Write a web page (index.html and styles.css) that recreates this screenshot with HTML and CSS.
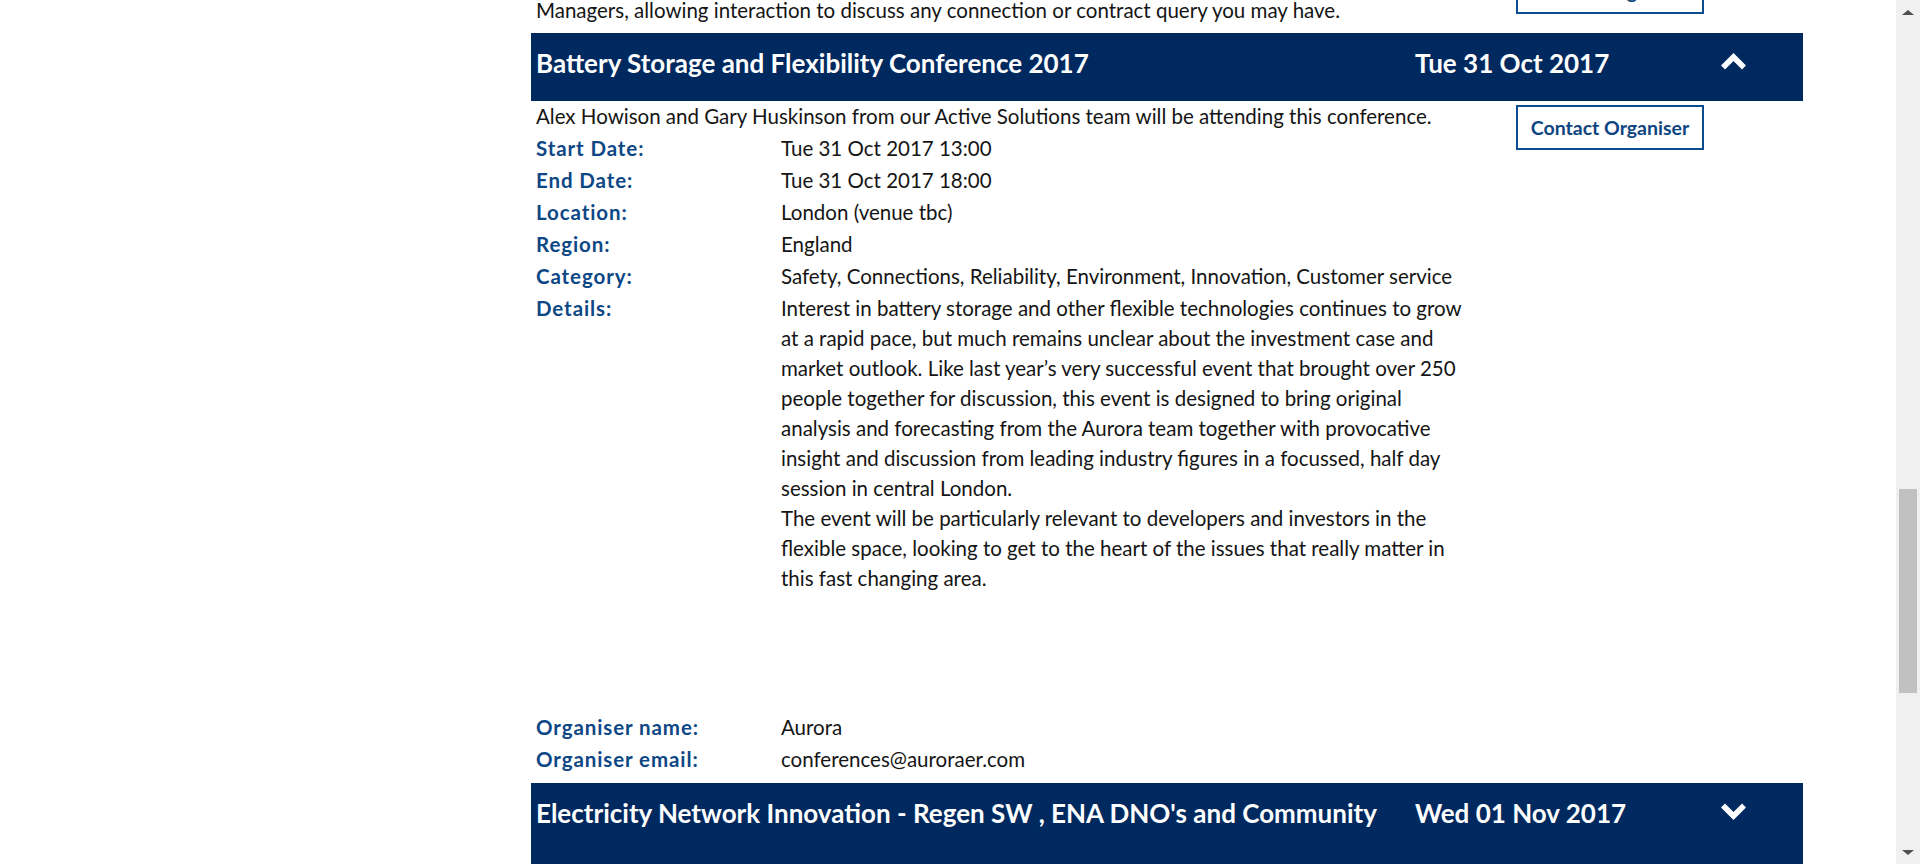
FILE: index.html
```html
<!DOCTYPE html>
<html lang="en">
<head>
<meta charset="utf-8">
<title>Events</title>
<link rel="stylesheet" href="styles.css">
</head>
<body>
<main class="page">
  <div class="events">
    <section class="event">
      <div class="event-body prev">
        <div class="event-main">
          <p class="intro intro-cont">Managers, allowing interaction to discuss any connection or contract query you may have.</p>
        </div>
        <div class="event-actions">
          <a class="btn" href="#">Contact Organiser</a>
        </div>
      </div>
    </section>

    <section class="event">
      <div class="event-head">
        <div class="event-title">Battery Storage and Flexibility Conference 2017</div>
        <div class="event-date">Tue 31 Oct 2017</div>
        <svg class="chev" width="25" height="17" viewBox="0 0 25 17" aria-hidden="true"><polygon points="12.5,0 25,12.5 21,16.5 12.5,8 4,16.5 0,12.5" fill="#fff"/></svg>
      </div>
      <div class="event-body">
        <div class="event-main">
          <p class="intro">Alex Howison and Gary Huskinson from our Active Solutions team will be attending this conference.</p>
          <dl class="info">
            <dt>Start Date:</dt><dd>Tue 31 Oct 2017 13:00</dd>
            <dt>End Date:</dt><dd>Tue 31 Oct 2017 18:00</dd>
            <dt>Location:</dt><dd>London (venue tbc)</dd>
            <dt>Region:</dt><dd>England</dd>
            <dt>Category:</dt><dd>Safety, Connections, Reliability, Environment, Innovation, Customer service</dd>
            <dt>Details:</dt>
            <dd class="details">
              <p>Interest in battery storage and other flexible technologies continues to grow<br>at a rapid pace, but much remains unclear about the investment case and<br>market outlook. Like last year’s very successful event that brought over 250<br>people together for discussion, this event is designed to bring original<br>analysis and forecasting from the Aurora team together with provocative<br>insight and discussion from leading industry figures in a focussed, half day<br>session in central London.</p>
              <p>The event will be particularly relevant to developers and investors in the<br>flexible space, looking to get to the heart of the issues that really matter in<br>this fast changing area.</p>
            </dd>
            <dt>Organiser name:</dt><dd>Aurora</dd>
            <dt>Organiser email:</dt><dd>conferences@auroraer.com</dd>
          </dl>
        </div>
        <div class="event-actions">
          <a class="btn" href="#">Contact Organiser</a>
        </div>
      </div>
    </section>

    <section class="event">
      <div class="event-head closed">
        <div class="event-title">Electricity Network Innovation - Regen SW , ENA DNO's and Community</div>
        <div class="event-date">Wed 01 Nov 2017</div>
        <svg class="chev" width="25" height="17" viewBox="0 0 25 17" aria-hidden="true"><polygon points="12.5,17 25,4.5 21,0.5 12.5,9 4,0.5 0,4.5" fill="#fff"/></svg>
      </div>
    </section>
  </div>
</main>
<aside class="scrollbar" aria-hidden="true">
  <div class="sb-arrow"><span class="tri-up"></span></div>
  <div class="sb-track"><div class="sb-thumb"></div></div>
  <div class="sb-arrow"><span class="tri-down"></span></div>
</aside>
</body>
</html>
```
FILE: styles.css
```css
html, body {
  margin: 0;
  height: 864px;
  overflow: hidden;
}
body {
  display: flex;
  background: #fff;
  color: #151515;
  font-family: Lato, "Liberation Sans", sans-serif;
}
.page {
  flex: 1;
  min-width: 0;
}
.events {
  width: 1272px;
  margin-left: 531px;
}

/* header bar */
.event-head {
  display: grid;
  grid-template-columns: 879px 306px 25px;
  padding: 12px 0 20px 5px;
  background: #00295f;
  color: #fff;
  font-weight: 700;
  font-size: 26px;
  line-height: 36px;
}
.event-head.closed {
  padding-bottom: 44px;
}
.event-title,
.event-date {
  white-space: nowrap;
}
.chev {
  display: block;
  margin-top: 8px;
}

/* body */
.event-body {
  display: grid;
  grid-template-columns: 940px 1fr;
  padding: 0 0 8px 5px;
  font-size: 20.5px;
  line-height: 30px;
}
.event-body.prev {
  margin-top: -35px;
}
.intro {
  margin: 0;
  white-space: nowrap;
}
.intro-cont {
  padding-top: 30px;
}
.event-actions {
  padding-left: 40px;
}
.btn {
  display: block;
  box-sizing: border-box;
  width: 188px;
  height: 45px;
  margin-top: 4px;
  border: 2px solid #0b4c8e;
  background: #fff;
  color: #0e4581;
  font-weight: 700;
  font-size: 19.5px;
  line-height: 41px;
  text-align: center;
  text-decoration: none;
}

.info {
  display: grid;
  grid-template-columns: 245px 1fr;
  margin: 1px 0 0;
}
.info dt,
.info dd {
  margin: 0;
  padding: 1px 0;
}
.info dt {
  color: #0e4785;
  font-weight: 700;
  letter-spacing: 0.9px;
}
.details {
  padding-bottom: 118px !important;
}
.details p {
  margin: 0;
  white-space: nowrap;
}

/* scrollbar */
.scrollbar {
  flex: none;
  width: 24px;
  display: flex;
  flex-direction: column;
  background: #f0f0f0;
}
.sb-arrow {
  height: 24px;
  display: flex;
  align-items: center;
  justify-content: center;
}
.tri-up,
.tri-down {
  width: 0;
  height: 0;
  border-left: 6px solid transparent;
  border-right: 6px solid transparent;
}
.tri-up {
  border-bottom: 5px solid #505050;
}
.tri-down {
  border-top: 5px solid #505050;
}
.sb-track {
  flex: 1;
  padding: 0 3px;
}
.sb-thumb {
  margin-top: 465px;
  height: 204px;
  background: #c1c1c1;
}
```
